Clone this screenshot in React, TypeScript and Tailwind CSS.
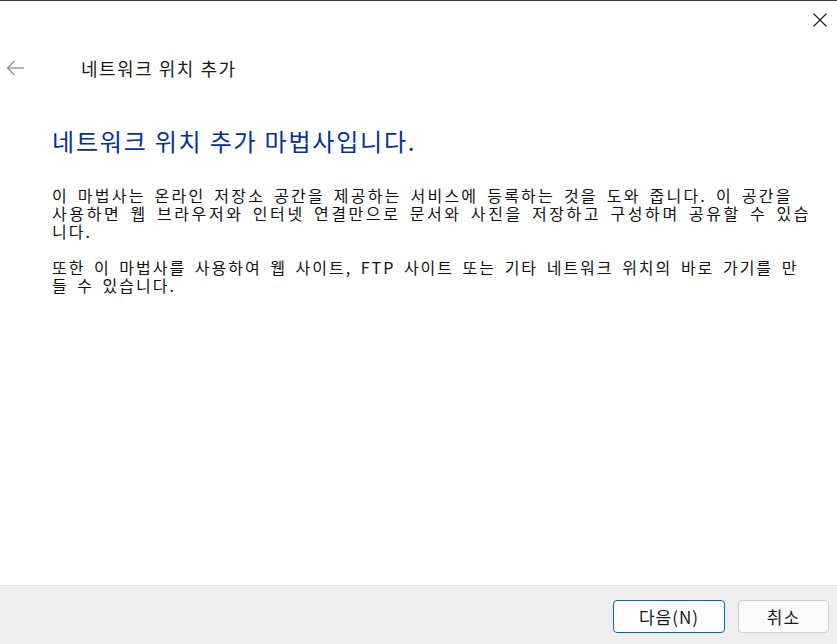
import React from 'react';

// each line keeps the wrap of the original dialog; tracking tuned per line
const bodyLines1 = [
  { text: '이 마법사는 온라인 저장소 공간을 제공하는 서비스에 등록하는 것을 도와 줍니다. 이 공간을', cls: 'tracking-[2.25px]' },
  { text: '사용하면 웹 브라우저와 인터넷 연결만으로 문서와 사진을 저장하고 구성하며 공유할 수 있습', cls: 'tracking-[2.6px]' },
  { text: '니다.', cls: 'tracking-[2px]' },
];

const bodyLines2 = [
  { text: '또한 이 마법사를 사용하여 웹 사이트, FTP 사이트 또는 기타 네트워크 위치의 바로 가기를 만', cls: 'tracking-[2px]' },
  { text: '들 수 있습니다.', cls: 'tracking-[2px]' },
];

const App: React.FC = () => {
  return (
    <div
      className="w-[837px] h-[644px] bg-white flex flex-col border-t border-[#3c3c3c] text-[#1a1a1a] overflow-hidden"
      style={{ fontFamily: '"Noto Sans CJK KR", "Malgun Gothic", sans-serif' }}
    >
      {/* close button row */}
      <div className="flex justify-end h-[40px] pr-[10px] pt-[12px]">
        <button className="w-[14px] h-[14px] flex items-center justify-center">
          <svg width="14" height="14" viewBox="0 0 14 14">
            <path d="M0.5 0.5 L13.5 13.5 M13.5 0.5 L0.5 13.5" stroke="#1a1a1a" strokeWidth="1.1" fill="none" />
          </svg>
        </button>
      </div>

      {/* nav row */}
      <div className="flex items-center h-[54px]">
        <div className="w-[81px] pl-[6px] flex items-center">
          <svg width="19" height="16" viewBox="0 0 19 16">
            <path d="M18 8 H1.5 M8.5 1 L1.5 8 L8.5 15" stroke="#9c9c9c" strokeWidth="1.6" fill="none" />
          </svg>
        </div>
        <span className="text-[18px] leading-none text-[#1b1b1b] tracking-[1.5px]">네트워크 위치 추가</span>
      </div>

      {/* content */}
      <div className="pl-[52px] pr-4">
        <h1 className="text-[24px] leading-[34px] text-[#003399] mt-[29px] tracking-[1.8px]">
          네트워크 위치 추가 마법사입니다.
        </h1>
        <div className="mt-[28px] text-[16px] leading-[18px] text-[#111] [word-spacing:3px]">
          {bodyLines1.map((l) => (
            <div key={l.text} className={`whitespace-nowrap ${l.cls}`}>{l.text}</div>
          ))}
          <div className="h-[18px]" />
          {bodyLines2.map((l) => (
            <div key={l.text} className={`whitespace-nowrap ${l.cls}`}>{l.text}</div>
          ))}
        </div>
      </div>

      {/* footer */}
      <div className="mt-auto h-[59px] border-t border-[#dfdfdf] bg-[#eeeeee] flex justify-end items-start pt-[14px] pr-[8px] gap-[13px]">
        <button className="w-[112px] h-[33px] rounded-[4px] border border-[#0067c0] bg-white text-[17px] tracking-[1px] text-[#1a1a1a] flex items-center justify-center">
          다음(N)
        </button>
        <button className="w-[91px] h-[33px] rounded-[4px] border border-[#d0d0d0] bg-[#fbfbfb] text-[17px] tracking-[1px] text-[#1a1a1a] flex items-center justify-center">
          취소
        </button>
      </div>
    </div>
  );
};

export default App;
